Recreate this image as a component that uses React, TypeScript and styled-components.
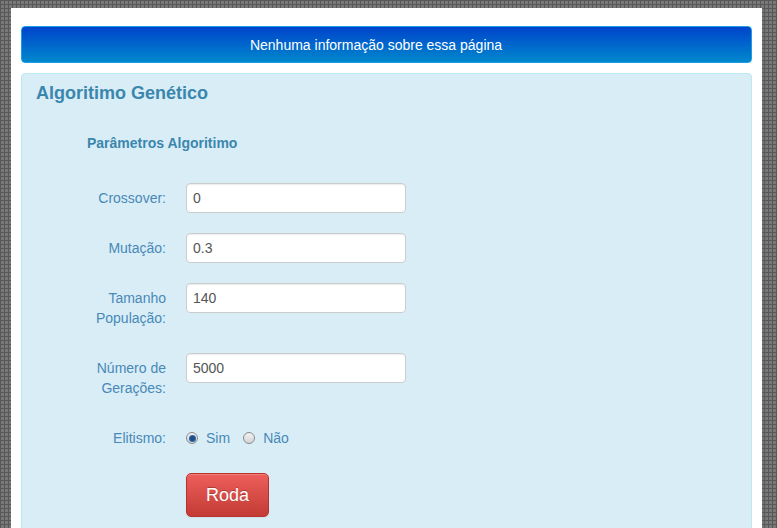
import React from "react";
import styled, { createGlobalStyle } from "styled-components";

const Global = createGlobalStyle`
  html, body { margin: 0; padding: 0; overflow: hidden; }
  body {
    font-family: "Liberation Sans", Arial, sans-serif;
    font-size: 14px;
    background-color: #787878;
    background-image:
      linear-gradient(#585858 1px, transparent 1px),
      linear-gradient(90deg, #585858 1px, transparent 1px);
    background-size: 4px 4px;
  }
`;

const Page = styled.div`
  margin: 8px 0 0 11px;
  width: 751px;
  height: 600px;
  background: #fff;
  padding: 18px 10px 0 10px;
  box-sizing: border-box;
`;

const InfoBar = styled.div`
  height: 37px;
  box-sizing: border-box;
  padding: 0 35px 0 14px;
  border: 1px solid #1c9ee6;
  border-radius: 4px;
  background: linear-gradient(#0044cc, #0088cc);
  color: #fff;
  font-size: 14px;
  line-height: 36px;
  text-align: center;
`;

const Panel = styled.div`
  margin-top: 10px;
  background: #d9edf7;
  border: 1px solid #bce8f1;
  border-radius: 4px;
  padding: 9px 14px 60px 14px;
`;

const Title = styled.h2`
  margin: 0;
  font-size: 18px;
  line-height: 20px;
  font-weight: bold;
  color: #3a87ad;
`;

const Form = styled.div`
  margin: 30px 0 0 51px;
`;

const Heading = styled.h4`
  margin: 0 0 30px 0;
  font-size: 14px;
  line-height: 20px;
  font-weight: bold;
  color: #3a87ad;
`;

const Row = styled.div`
  display: flex;
  align-items: flex-start;
  margin-bottom: 20px;
`;

const Label = styled.label`
  width: 79px;
  flex: none;
  text-align: right;
  padding: 5px 0;
  line-height: 20px;
  font-size: 14px;
  color: #4889b6;
  margin-right: 20px;
`;

const TextInput = styled.input`
  width: 220px;
  height: 30px;
  box-sizing: border-box;
  padding: 4px 6px;
  border: 1px solid #cccccc;
  border-radius: 4px;
  background: #fff;
  font-family: "Liberation Sans", Arial, sans-serif;
  font-size: 14px;
  color: #555;
  box-shadow: inset 0 1px 1px rgba(0, 0, 0, 0.075);
  outline: none;
`;

const Radios = styled.div`
  display: flex;
  align-items: center;
  height: 30px;
`;

const RadioOption = styled.span`
  display: inline-flex;
  align-items: center;
  margin-right: 13px;
  color: #4889b6;
  font-size: 14px;
`;

const RadioCircle = styled.span<{ $checked?: boolean }>`
  width: 10px;
  height: 10px;
  border-radius: 50%;
  border: 1px solid #8a8a8a;
  background: linear-gradient(#f2f2f2, #d4d4d4);
  display: inline-flex;
  align-items: center;
  justify-content: center;
  margin-right: 8px;
  &::after {
    content: "";
    width: 5px;
    height: 5px;
    border-radius: 50%;
    background: ${(p) => (p.$checked ? "#1d4f86" : "transparent")};
    box-shadow: ${(p) => (p.$checked ? "0 0 0 1px #2c6aa8" : "none")};
  }
`;

const Button = styled.button`
  margin-left: 99px;
  width: 83px;
  height: 44px;
  border: 1px solid #b8332c;
  border-radius: 5px;
  background: linear-gradient(#ee5f5b, #c23b34);
  color: #fff;
  font-family: "Liberation Sans", Arial, sans-serif;
  font-size: 18px;
  text-shadow: 0 -1px 0 rgba(0, 0, 0, 0.25);
  box-shadow: inset 0 1px 0 rgba(255, 255, 255, 0.2), 0 1px 2px rgba(0, 0, 0, 0.05);
  cursor: pointer;
`;

export default function App() {
  return (
    <>
      <Global />
      <Page>
        <InfoBar>Nenhuma informação sobre essa página</InfoBar>
        <Panel>
          <Title>Algoritimo Genético</Title>
          <Form>
            <Heading>Parâmetros Algoritimo</Heading>
            <Row>
              <Label>Crossover:</Label>
              <TextInput defaultValue="0" />
            </Row>
            <Row>
              <Label>Mutação:</Label>
              <TextInput defaultValue="0.3" />
            </Row>
            <Row>
              <Label>Tamanho População:</Label>
              <TextInput defaultValue="140" />
            </Row>
            <Row>
              <Label>Número de Gerações:</Label>
              <TextInput defaultValue="5000" />
            </Row>
            <Row>
              <Label>Elitismo:</Label>
              <Radios>
                <RadioOption>
                  <RadioCircle $checked />
                  Sim
                </RadioOption>
                <RadioOption>
                  <RadioCircle />
                  Não
                </RadioOption>
              </Radios>
            </Row>
            <Button>Roda</Button>
          </Form>
        </Panel>
      </Page>
    </>
  );
}
